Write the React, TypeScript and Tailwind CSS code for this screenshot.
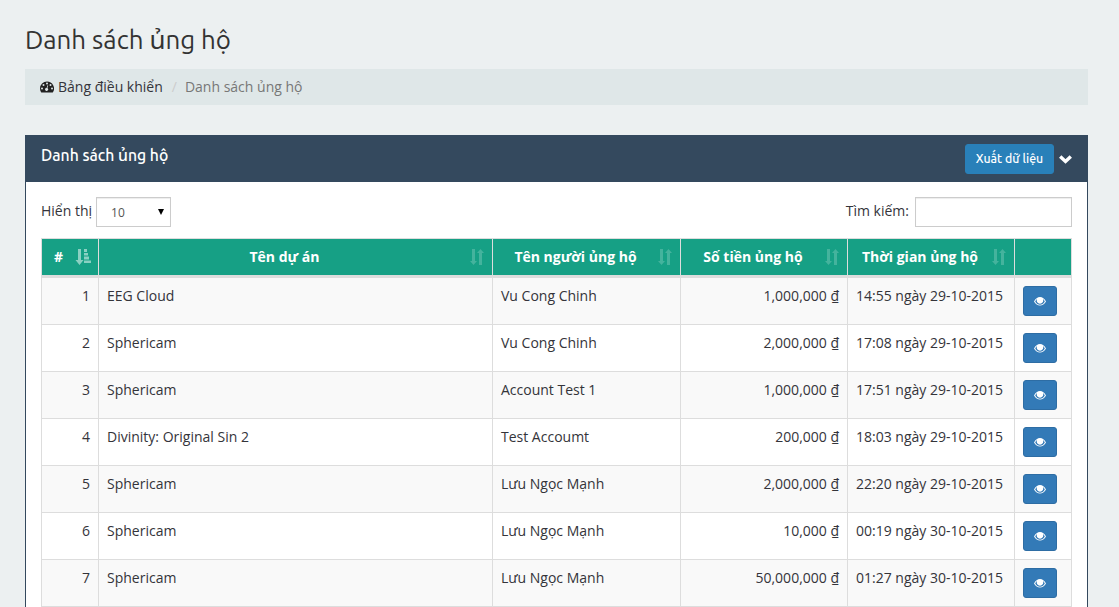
import React from "react";

type Row = [number, string, string, string, string];

const rows: Row[] = [
  [1, "EEG Cloud", "Vu Cong Chinh", "1,000,000 ₫", "14:55 ngày 29-10-2015"],
  [2, "Sphericam", "Vu Cong Chinh", "2,000,000 ₫", "17:08 ngày 29-10-2015"],
  [3, "Sphericam", "Account Test 1", "1,000,000 ₫", "17:51 ngày 29-10-2015"],
  [4, "Divinity: Original Sin 2", "Test Accoumt", "200,000 ₫", "18:03 ngày 29-10-2015"],
  [5, "Sphericam", "Lưu Ngọc Mạnh", "2,000,000 ₫", "22:20 ngày 29-10-2015"],
  [6, "Sphericam", "Lưu Ngọc Mạnh", "10,000 ₫", "00:19 ngày 30-10-2015"],
  [7, "Sphericam", "Lưu Ngọc Mạnh", "50,000,000 ₫", "01:27 ngày 30-10-2015"],
];

const cols = "grid grid-cols-[57px_394px_188px_167px_167px_56px]";

function GaugeIcon() {
  return (
    <svg className="h-[12px] w-[14px] shrink-0" viewBox="0 0 14 12">
      <path fill="#222" d="M7 .5a7 7 0 0 0-7 7c0 1.400.4 2.700 1.100 3.800.1.100.3.200.4.200h11c.200 0 .3-.1.400-.2A7 7 0 0 0 7 .5z" />
      <g fill="#dfe7e8">
        <circle cx="2" cy="7.500" r="1" />
        <circle cx="3.500" cy="4" r="1" />
        <circle cx="7" cy="2.500" r="1" />
        <circle cx="10.500" cy="4" r="1" />
        <circle cx="12" cy="7.500" r="1" />
        <path d="M8.200 4.400l-.8 2.700a1.500 1.500 0 1 1-.8-.2l.9-2.700z" />
      </g>
    </svg>
  );
}

function SortIcon() {
  return (
    <svg className="h-4 w-4" viewBox="0 0 16 16" fill="#fff" fillOpacity="0.2">
      <path d="M3 0h3v12h2l-3.500 4L1 12h2zM10 16V4H8l3.500-4L15 4h-2v12z" />
    </svg>
  );
}

function SortedIcon() {
  return (
    <svg className="h-4 w-4" viewBox="0 0 16 16" fill="#fff" fillOpacity="0.5">
      <path d="M3 0h3v11h2.500l-4 5-4-5H3zM9 0h3v3H9zM9 4h4v2.500H9zM9 7.500h5v3H9zM9 11.500h7V14H9z" />
    </svg>
  );
}

function EyeIcon() {
  return (
    <svg className="h-[9px] w-3" viewBox="0 0 12 9">
      <path
        fill="#fff"
        fillRule="evenodd"
        d="M0 4.500C1.500 1.500 3.600 0 6 0s4.500 1.500 6 4.500C10.500 7.300 8.400 8.600 6 8.600S1.500 7.300 0 4.500zM1.200 4.500C2.500 6.800 4.100 7.700 6 7.700s3.500-.9 4.800-3.200C10.300 3.500 9.700 2.700 9 2.100 9.900 4.800 8.300 6.700 6 6.700S2.100 4.800 3 2.100C2.300 2.700 1.700 3.500 1.200 4.500z"
      />
    </svg>
  );
}

function Head({ label }: { label: string }) {
  return (
    <div className="relative border-r border-[#ddd] pr-[22px] text-center">
      {label}
      <span className="absolute right-[7px] top-[10px]">
        <SortIcon />
      </span>
    </div>
  );
}

export default function App() {
  return (
    <div className="h-[607px] overflow-hidden bg-[#ecf0f1] px-[25px] font-['Open_Sans',sans-serif] text-[14px] leading-5 text-[#34343a]">
      <h1 className="h-[69px] pt-[24px] font-[Ubuntu,'Noto_Sans',sans-serif] text-[25.900px] leading-[31px] text-[#333]">
        Danh sách ủng hộ
      </h1>
      <nav className="flex h-9 w-[1063px] items-center bg-[#dfe7e8] pl-[15px]">
        <GaugeIcon />
        <span className="ml-1">Bảng điều khiển</span>
        <span className="ml-[9px] mr-2 text-[#ccc]">/</span>
        <span className="text-[#777]">Danh sách ủng hộ</span>
      </nav>
      <section className="mt-[30px] w-[1063px] border border-[#34495e] bg-white">
        <header className="flex h-[46px] items-center justify-between bg-[#34495e] px-[15px] text-white">
          <h2 className="mb-[8px] font-[Ubuntu,'Noto_Sans',sans-serif] text-[15.750px] font-medium">Danh sách ủng hộ</h2>
          <div className="flex items-center gap-[5px]">
            <button className="h-[30px] w-[89px] rounded-[3px] border border-[#2980b9] bg-[#2980b9] font-[Ubuntu,'Noto_Sans',sans-serif] text-[12.300px] font-medium">
              Xuất dữ liệu
            </button>
            <svg className="h-[9px] w-[13px]" viewBox="0 0 13 9" fill="none" stroke="#fff" strokeWidth="3.400">
              <path d="M1.200 1.500l5.300 5 5.300-5" />
            </svg>
          </div>
        </header>
        <div className="px-[15px] pt-[15px]">
          <div className="flex h-[41px] justify-between">
            <div className="flex gap-1">
              <span className="pt-1">Hiển thị</span>
              <div className="flex h-[30px] w-[75px] items-center justify-between border border-[#ccc] pl-[14px] pr-[6px] text-[12px] text-[#555] shadow-[inset_0_1px_1px_rgba(0,0,0,0.075)]">
                <span className="pt-px">10</span>
                <svg className="h-[6px] w-[6px]" viewBox="0 0 6 6">
                  <path d="M0 0h6L3 6z" fill="#000" />
                </svg>
              </div>
            </div>
            <div className="flex gap-[6px]">
              <span className="pt-1">Tìm kiếm:</span>
              <div className="h-[30px] w-[157px] border border-[#ccc] shadow-[inset_0_1px_1px_rgba(0,0,0,0.075)]" />
            </div>
          </div>
          <div className="w-[1031px] border border-[#ddd]">
            <div className={`${cols} h-[39px] border-b-3 border-[#ddd] bg-[#16a085] font-bold leading-9 text-white`}>
              <div className="relative border-r border-[#ddd] pl-3">
                #
                <span className="absolute right-[7px] top-[10px]">
                  <SortedIcon />
                </span>
              </div>
              <Head label="Tên dự án" />
              <Head label="Tên người ủng hộ" />
              <Head label="Số tiền ủng hộ" />
              <Head label="Thời gian ủng hộ" />
              <div />
            </div>
            {rows.map(([n, project, name, amount, time]) => (
              <div key={n} className={`${cols} h-[47px] border-b border-[#ddd] odd:bg-white even:bg-[#f9f9f9]`}>
                <div className="border-r border-[#ddd] px-2 pt-2 text-right">{n}</div>
                <div className="border-r border-[#ddd] px-2 pt-2">{project}</div>
                <div className="border-r border-[#ddd] px-2 pt-2">{name}</div>
                <div className="border-r border-[#ddd] px-2 pt-2 text-right">{amount}</div>
                <div className="whitespace-nowrap border-r border-[#ddd] px-2 pt-2">{time}</div>
                <div className="px-2 pt-2">
                  <button className="flex h-[30px] w-[34px] items-center justify-center rounded-[3px] border border-[#2e6da4] bg-[#337ab7]">
                    <EyeIcon />
                  </button>
                </div>
              </div>
            ))}
          </div>
        </div>
      </section>
    </div>
  );
}
